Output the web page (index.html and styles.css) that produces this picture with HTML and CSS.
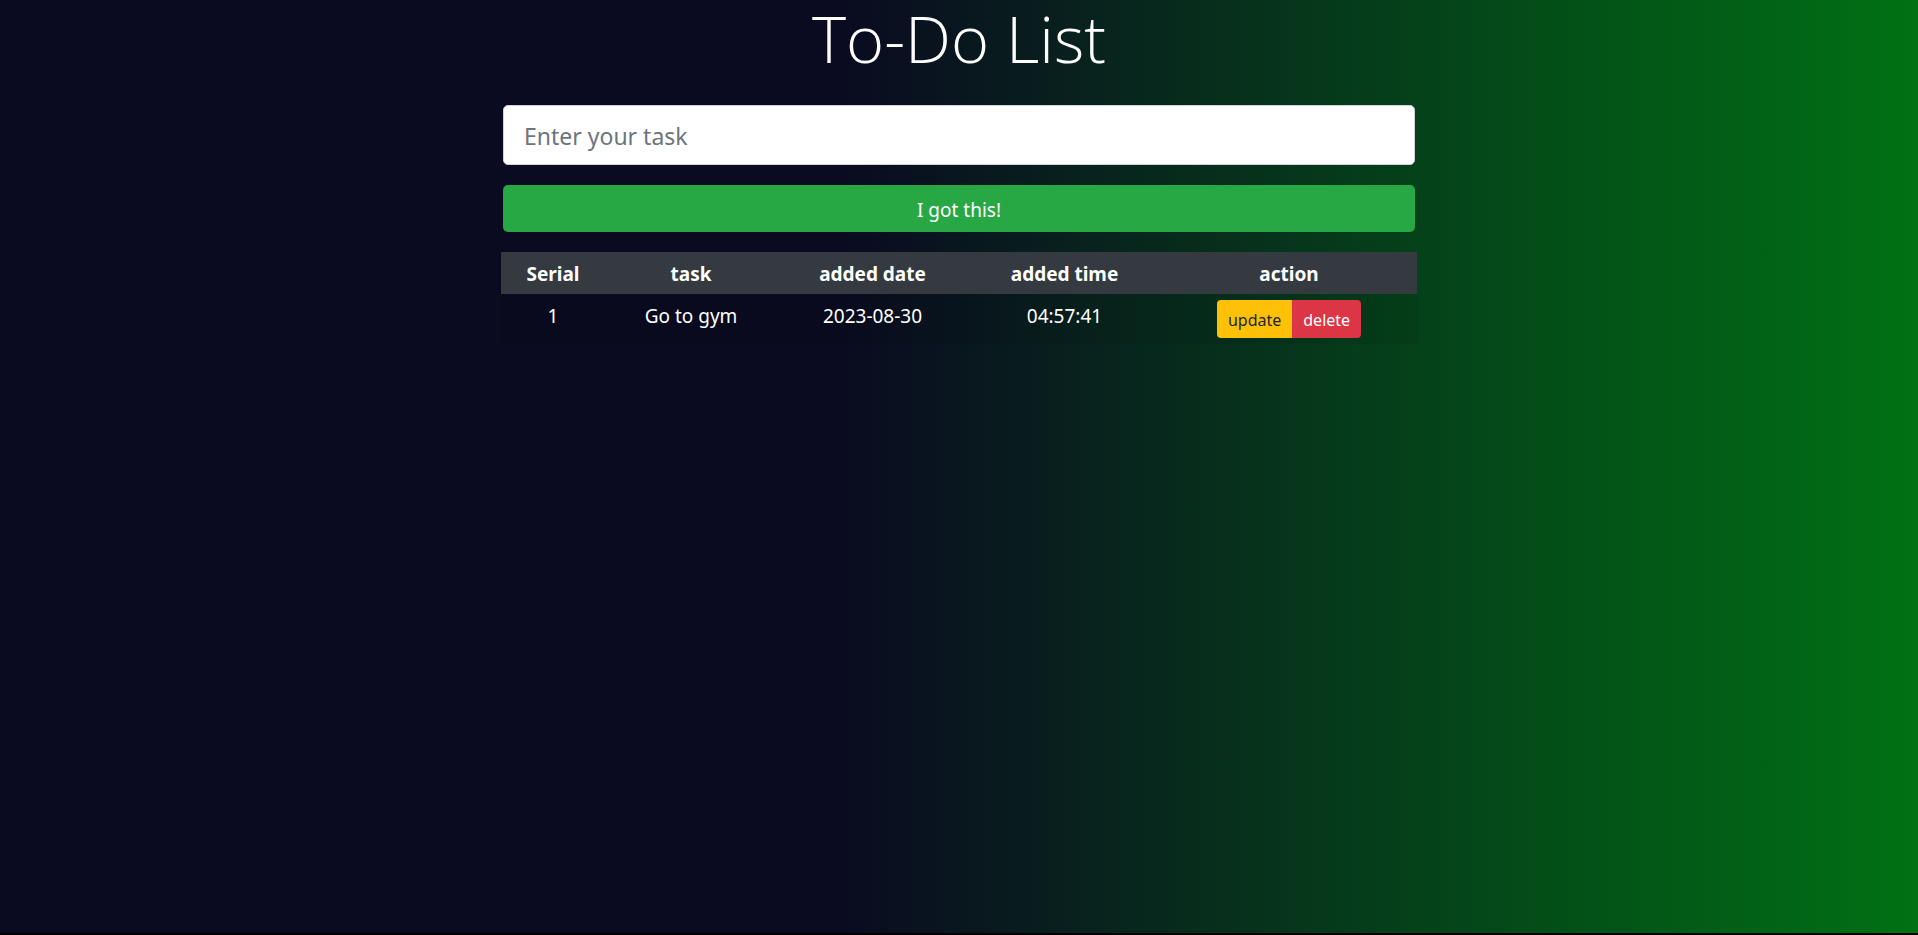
FILE: index.html
```html
<!DOCTYPE html>
<html lang="en">
<head>
<meta charset="utf-8">
<meta name="viewport" content="width=device-width, initial-scale=1">
<title>To-Do List</title>
<link rel="stylesheet" href="styles.css">
</head>
<body>
<main class="page">
  <h1 class="title">To-Do List</h1>
  <div class="container">
    <form class="task-form">
      <input class="task-input" type="text" name="task" placeholder="Enter your task" aria-label="Enter your task">
      <button class="submit" type="submit">I got this!</button>
    </form>
    <table class="tasks">
      <colgroup>
        <col class="col-serial"><col class="col-task"><col class="col-date"><col class="col-time"><col class="col-action">
      </colgroup>
      <thead>
        <tr><th scope="col">Serial</th><th scope="col">task</th><th scope="col">added date</th><th scope="col">added time</th><th scope="col">action</th></tr>
      </thead>
      <tbody>
        <tr>
          <td>1</td><td>Go to gym</td><td>2023-08-30</td><td>04:57:41</td>
          <td><div class="actions"><button class="action update" type="button">update</button><button class="action delete" type="button">delete</button></div></td>
        </tr>
      </tbody>
    </table>
  </div>
</main>
</body>
</html>
```
FILE: styles.css
```css
* { box-sizing: border-box; }

html { background: #000; }

body {
  margin: 0;
  font-family: "Noto Sans", "Open Sans", sans-serif;
  font-size: 19px;
  line-height: 30px;
  color: #fff;
}

.page {
  min-height: calc(100vh - 2px);
  background: linear-gradient(90deg, #0a0b20 44%, #007114 100%);
}

.title {
  margin: 0;
  padding-bottom: 29px;
  font-family: "Open Sans", "Noto Sans", sans-serif;
  font-size: 65px;
  font-weight: 300;
  line-height: 76px;
  text-align: center;
}

.container {
  width: 100%;
  max-width: 916px;
  margin: 0 auto;
}

.task-form {
  display: flex;
  flex-direction: column;
  gap: 20px;
  padding: 0 2px 20px;
}

.task-input {
  width: 100%;
  height: 60px;
  padding: 2px 20px 0;
  border: 1px solid #ced4da;
  border-radius: 5px;
  background: #fff;
  color: #495057;
  font: inherit;
  font-size: 23px;
}

.task-input::placeholder { color: #6c757d; opacity: 1; }

.submit {
  padding: 10px 15px 7px;
  border: 0;
  border-radius: 5px;
  background: #28a745;
  color: #fff;
  font: inherit;
  line-height: 30px;
}

.tasks {
  width: 100%;
  border-collapse: collapse;
  table-layout: fixed;
  text-align: center;
}

.col-serial { width: 104px; }
.col-task { width: 172px; }
.col-date { width: 191px; }
.col-time { width: 193px; }
.col-action { width: 256px; }

.tasks th {
  padding: 7px 6px 5px;
  background: #343a40;
  font-weight: 700;
}

.tasks td {
  padding: 7px 6px 5px;
  vertical-align: top;
}

.tasks td:last-child { padding: 6px; }

.tasks tbody tr { background: rgba(0, 0, 0, 0.05); }

.actions { display: flex; justify-content: center; }

.action {
  padding: 6px 11px 4px;
  border: 0;
  font: inherit;
  font-size: 16px;
  line-height: 28px;
}

.update {
  border-radius: 4px 0 0 4px;
  background: #ffc107;
  color: #212529;
}

.delete {
  border-radius: 0 4px 4px 0;
  background: #dc3545;
  color: #fff;
}
```
